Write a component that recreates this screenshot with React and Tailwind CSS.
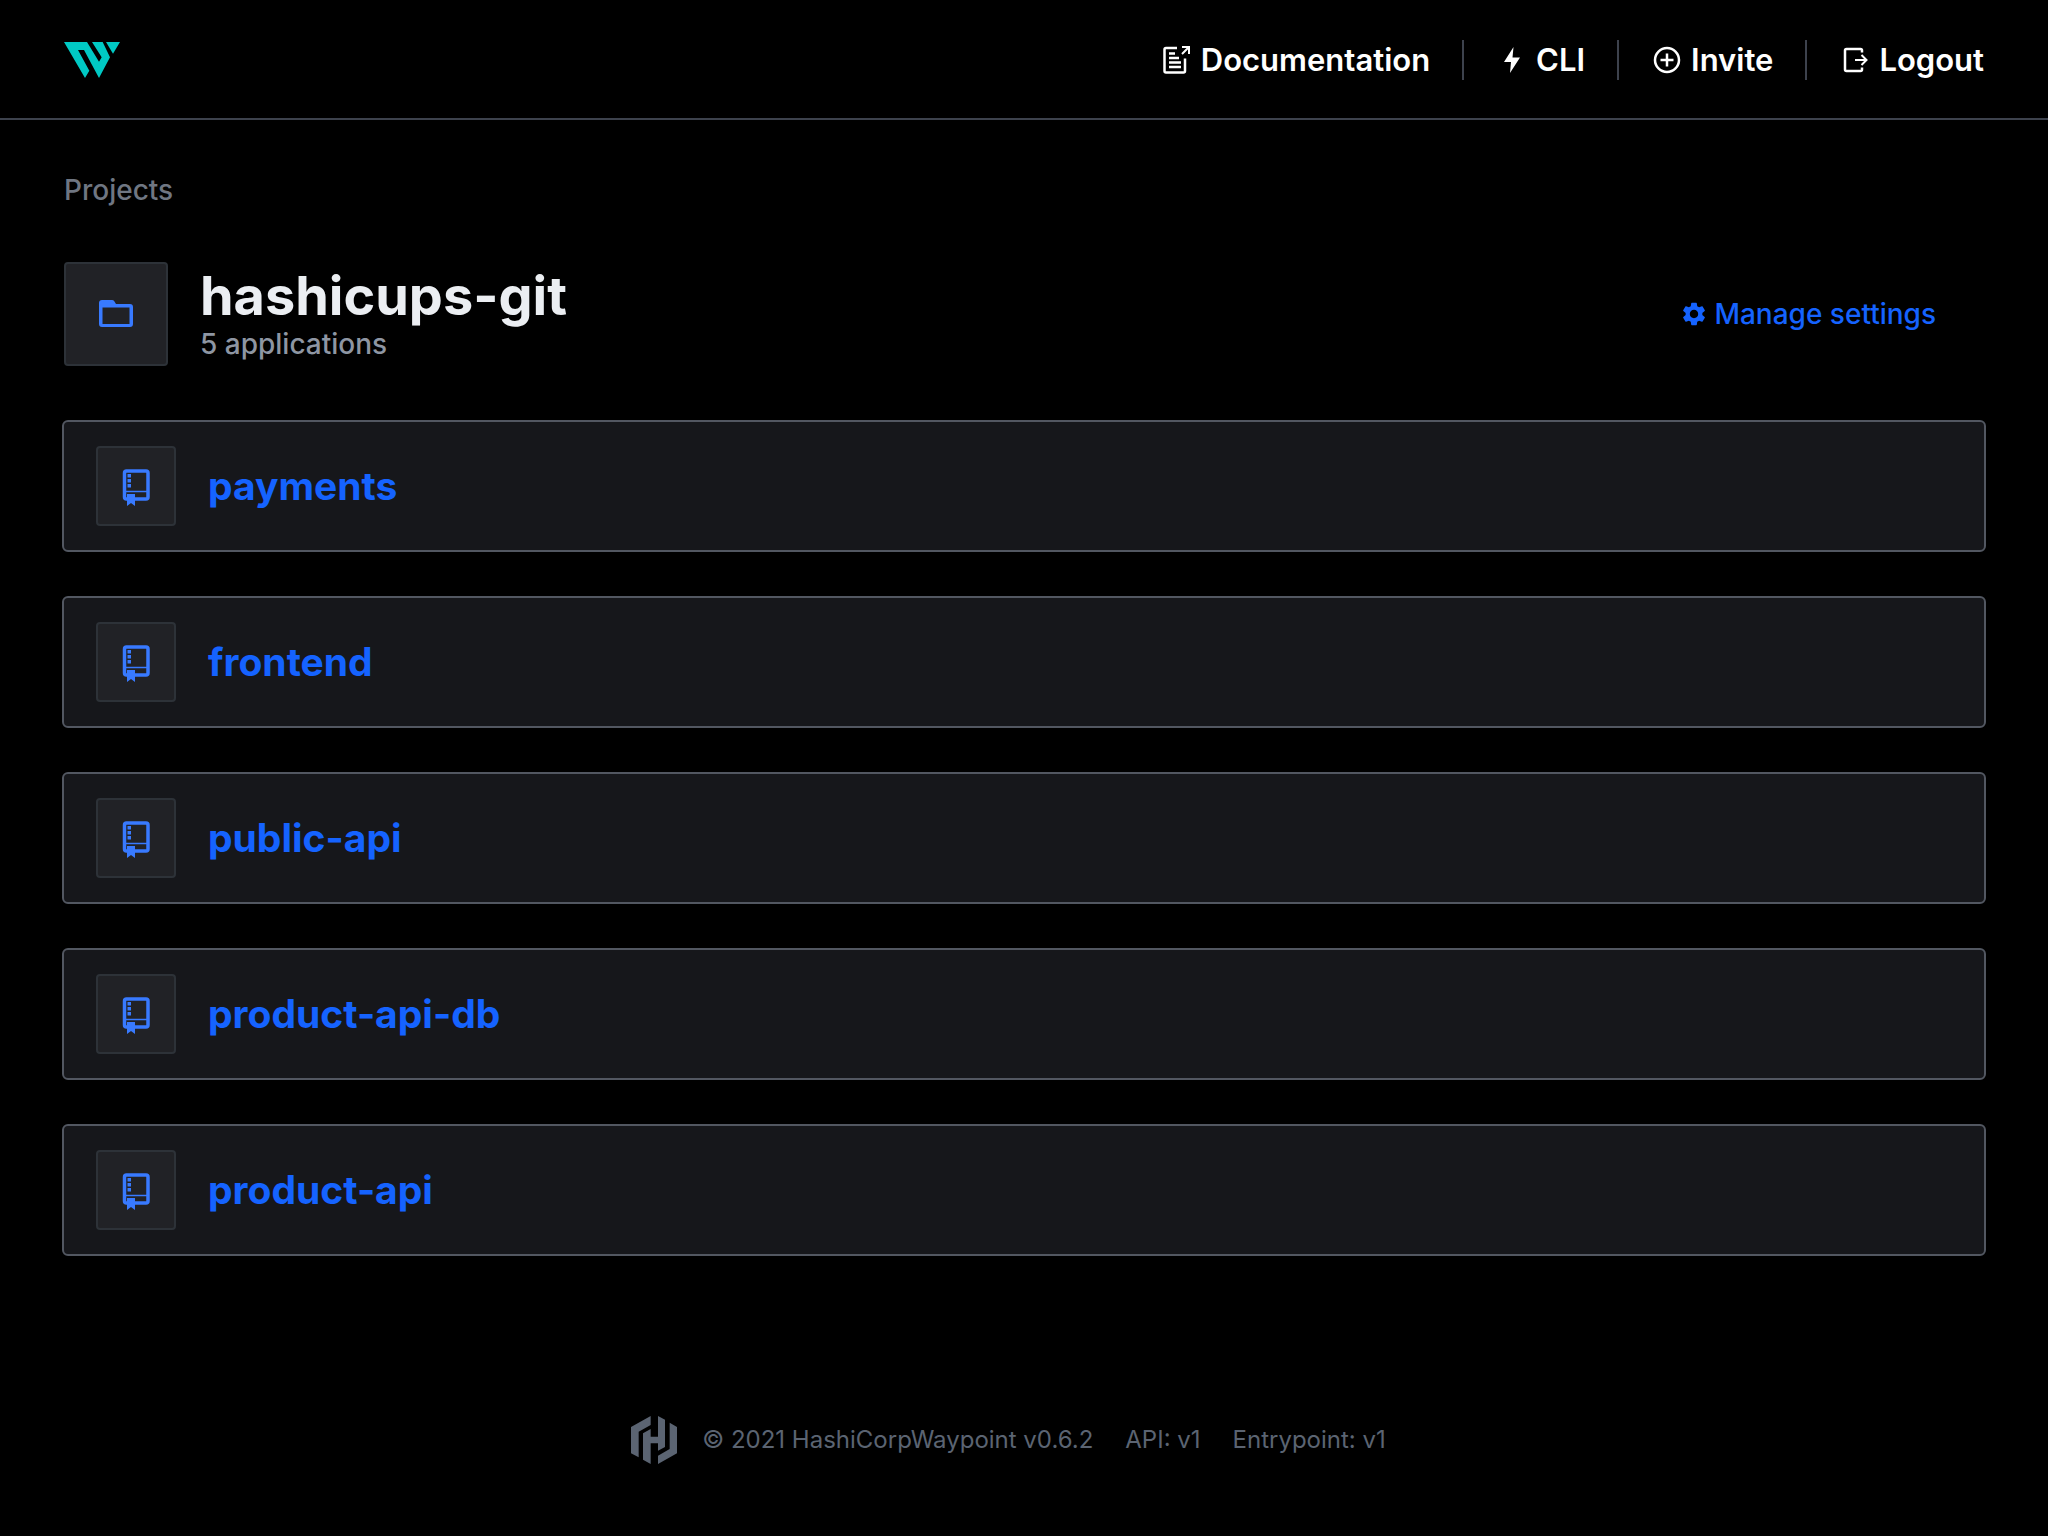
import React from "react";

const apps = ["payments", "frontend", "public-api", "product-api-db", "product-api"];

function WaypointLogo() {
  return (
    <svg className="h-9 w-14" viewBox="0 0 168 108" fill="#00c9c4" aria-hidden="true">
      <path d="M0 0H69L105 59L113 46L84 0H116L138 46L105 108L60 24H42L76 86L63 108Z" />
      <path d="M126 0H168L147 35Z" />
    </svg>
  );
}

function DocsIcon() {
  return (
    <svg className="h-8 w-8" viewBox="0 0 32 32" fill="none" stroke="currentColor" strokeWidth="2.5" aria-hidden="true">
      <path d="M16 4H5Q3.500 4 3.500 5.500V27Q3.500 28.500 5 28.500H22.500Q24 28.500 24 27V14.500" />
      <path d="M8 9.500H14M8 14H18M8 18.500H20M8 23H20" strokeWidth="2.500" />
      <path d="M21 3H28V10M27.500 3.500L21 10" strokeWidth="2" />
    </svg>
  );
}

function BoltIcon() {
  return (
    <svg className="h-8 w-8" viewBox="0 0 32 32" fill="currentColor" aria-hidden="true">
      <path d="M17.500 3L8 18H15L14 29L24 13.500H16.500Z" />
    </svg>
  );
}

function InviteIcon() {
  return (
    <svg className="h-8 w-8" viewBox="0 0 32 32" fill="none" stroke="currentColor" strokeWidth="2.500" aria-hidden="true">
      <circle cx="16" cy="16" r="12" />
      <path d="M16 9.500V22.500M9.500 16H22.500" />
    </svg>
  );
}

function LogoutIcon() {
  return (
    <svg className="h-8 w-8" viewBox="0 0 32 32" fill="none" stroke="currentColor" strokeWidth="2.500" aria-hidden="true">
      <path d="M23 8.500V6.500Q23 5 21.500 5H7.500Q6 5 6 6.500V25.500Q6 27 7.500 27H21.500Q23 27 23 25.500V23.500" />
      <path d="M16 16H27M22.500 11L27.500 16L22.500 21" strokeWidth="2" />
    </svg>
  );
}

function FolderIcon() {
  return (
    <svg className="h-10 w-10" viewBox="0 0 40 40" aria-hidden="true">
      <path fill="#387aff" fillRule="evenodd" d="M6 6H16Q17.500 6 18.300 7.200L20 10H34Q37 10 37 13V30Q37 33 34 33H6Q3 33 3 30V9Q3 6 6 6ZM6.500 13.500V30H33.500V13.500Z" />
    </svg>
  );
}

function RepoIcon() {
  return (
    <svg className="h-10 w-10" viewBox="0 0 40 40" fill="none" stroke="#387aff" aria-hidden="true">
      <rect x="8.500" y="5" width="23.500" height="28" rx="2" strokeWidth="3.500" />
      <path d="M8 25.500H32" strokeWidth="1.500" />
      <path fill="#387aff" stroke="none" d="M11.500 8h3.500v3.500h-3.500zM11.500 13h3.500v3.500h-3.500zM11.500 18h3.500v3.500h-3.500zM11 28h8v12l-4-3l-4 3z" />
    </svg>
  );
}

function GearIcon() {
  return (
    <svg className="h-7 w-7" viewBox="0 0 24 24" fill="currentColor" aria-hidden="true">
      <path d="M19.140 12.940c.04-.3.06-.61.06-.94 0-.32-.02-.64-.07-.94l2.030-1.580c.18-.14.23-.41.12-.61l-1.920-3.320c-.12-.22-.37-.29-.59-.22l-2.390.96c-.5-.38-1.030-.7-1.620-.94l-.36-2.540c-.04-.24-.24-.41-.48-.41h-3.840c-.24 0-.43.17-.47.41l-.36 2.540c-.59.24-1.130.57-1.620.94l-2.390-.96c-.22-.08-.47 0-.59.22L2.740 8.870c-.12.21-.08.47.12.61l2.030 1.580c-.05.3-.09.63-.09.94s.02.64.07.94l-2.030 1.580c-.18.14-.23.41-.12.61l1.920 3.320c.12.22.37.29.59.22l2.390-.96c.5.38 1.030.7 1.620.94l.36 2.540c.05.24.24.41.48.41h3.840c.24 0 .44-.17.47-.41l.36-2.540c.59-.24 1.130-.56 1.620-.94l2.390.96c.22.08.47 0 .59-.22l1.920-3.320c.12-.22.07-.47-.12-.61l-2.010-1.580zM12 15.600c-1.980 0-3.600-1.620-3.600-3.600s1.620-3.600 3.600-3.600 3.600 1.620 3.600 3.600-1.620 3.600-3.600 3.600z" />
    </svg>
  );
}

function HashiCorpLogo() {
  return (
    <svg className="h-12 w-12" viewBox="0 0 144 144" fill="currentColor" aria-hidden="true">
      <path d="M62 0L3 33V112L26 124V47L62 27Z" />
      <path d="M84 0L105 11V93L84 104V82H62V144L39 131V52L62 39V62H84Z" />
      <path d="M119 20L141 33V112L84 144V119L119 99Z" />
    </svg>
  );
}

const navItems = [
  { label: "Documentation", Icon: DocsIcon },
  { label: "CLI", Icon: BoltIcon },
  { label: "Invite", Icon: InviteIcon, button: true },
  { label: "Logout", Icon: LogoutIcon, button: true },
];

function NavItem({ label, Icon, button }) {
  const className = "flex items-center gap-2 text-[31px] leading-10 font-semibold text-white";
  return button ? (
    <button type="button" className={className}>
      <Icon />
      {label}
    </button>
  ) : (
    <a href="#" className={className}>
      <Icon />
      {label}
    </a>
  );
}

export default function App() {
  return (
    <div className="flex min-h-screen flex-col bg-black font-['Inter',sans-serif]">
      <header className="flex items-center justify-between border-b-2 border-[#3d424d] px-16 pt-10 pb-[38px]">
        <a href="#" aria-label="Waypoint">
          <WaypointLogo />
        </a>
        <nav className="flex divide-x-2 divide-[#3d424d]">
          {navItems.map((item) => (
            <div key={item.label} className="px-8 last:pr-0">
              <NavItem {...item} />
            </div>
          ))}
        </nav>
      </header>

      <main className="px-[62px] pt-[50px]">
        <a href="#" className="ml-0.5 inline-block text-[28px] leading-10 font-medium text-[#6f7682]">Projects</a>
        <div className="mt-[52px] flex items-center justify-between pr-[50px] pl-0.5">
          <div className="flex items-center gap-8">
            <div className="flex size-[104px] items-center justify-center rounded-sm border-2 border-[#2d3238] bg-[#212226]">
              <FolderIcon />
            </div>
            <div>
              <h1 className="text-[54px] leading-[60px] font-bold text-[#ebeef2]">hashicups-git</h1>
              <p className="text-[28px] leading-9 font-medium text-[#8e96a3]">5 applications</p>
            </div>
          </div>
          <a href="#" className="flex items-center gap-1.5 text-[28px] leading-10 font-medium text-[#1563ff]">
            <GearIcon />
            Manage settings
          </a>
        </div>

        <ul className="mt-[54px] flex flex-col gap-11">
          {apps.map((name) => (
            <li key={name}>
              <a href="#" className="flex items-center gap-8 rounded-md border-2 border-[#525761] bg-[#16171b] px-8 py-6">
                <span className="flex size-20 items-center justify-center rounded-sm border-2 border-[#2d3238] bg-[#212226]">
                  <RepoIcon />
                </span>
                <span className="text-[39px] leading-[48px] font-bold text-[#1563ff]">{name}</span>
              </a>
            </li>
          ))}
        </ul>
      </main>

      <footer className="mt-auto flex items-center justify-center pb-[72px] text-2xl leading-8 text-[#5b6472]">
        <HashiCorpLogo />
        <span className="ml-6">© 2021 HashiCorpWaypoint v0.6.2</span>
        <span className="ml-8">API: v1</span>
        <span className="mr-8 ml-8">Entrypoint: v1</span>
      </footer>
    </div>
  );
}
